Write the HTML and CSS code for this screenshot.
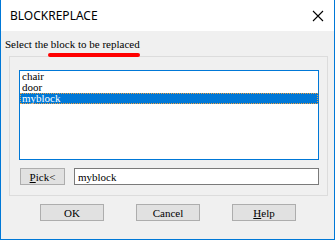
FILE: index.html
```html
<!DOCTYPE html>
<html lang="en">

<head>
    <meta charset="UTF-8">
    <meta name="viewport" content="width=device-width, initial-scale=1.0">
    <title>BLOCKREPLACE</title>
    <link rel="stylesheet" href="styles.css">
</head>

<body>
    <div class="window">
        <div class="titlebar">
            <span class="title">BLOCKREPLACE</span>
            <svg class="close" width="12" height="12" viewBox="0 0 12 12">
                <path d="M1 1 L11 11 M11 1 L1 11" stroke="#000" stroke-width="1.1" fill="none" />
            </svg>
        </div>
        <div class="content">
            <div class="prompt">Select the block to be replaced</div>
            <span class="marker"></span>
            <div class="group">
                <ul class="list">
                    <li>chair</li>
                    <li>door</li>
                    <li class="selected">myblock</li>
                </ul>
                <div class="pick-row">
                    <button type="button" class="btn pick"><u>P</u>ick&lt;</button>
                    <input type="text" class="name" value="myblock">
                </div>
            </div>
            <div class="actions">
                <button type="button" class="btn">OK</button>
                <button type="button" class="btn">Cancel</button>
                <button type="button" class="btn"><u>H</u>elp</button>
            </div>
        </div>
    </div>
</body>

</html>
```

FILE: styles.css
```css
body {
    margin: 0;
    font-family: "Liberation Serif", serif;
    font-size: 11px;
    background: #ffffff;
}

.window {
    width: 335px;
    height: 240px;
    box-sizing: border-box;
    border: 1px solid #0078d7;
    border-top: none;
    display: flex;
    flex-direction: column;
    background: #f0f0f0;
}

.titlebar {
    height: 31px;
    background: #ffffff;
    display: flex;
    align-items: center;
    justify-content: space-between;
    padding: 0 9px 0 9px;
    flex-shrink: 0;
}

.title {
    font-family: "Noto Sans", sans-serif;
    font-size: 12px;
    color: #000;
}

.close {
    margin-right: 1px;
}

.content {
    position: relative;
    flex: 1;
    padding: 6px 0 0 4px;
}

.prompt {
    height: 19px;
    line-height: 14px;
}

.marker {
    position: absolute;
    left: 47px;
    top: 22px;
    width: 92px;
    height: 4px;
    border-radius: 2px;
    background: #ff0000;
}

.group {
    margin-left: 4px;
    width: 319px;
    box-sizing: border-box;
    border: 1px solid #dcdcdc;
    padding: 13px 8px 10px 9px;
}

.list {
    list-style: none;
    margin: 0;
    padding: 0;
    height: 90px;
    box-sizing: border-box;
    border: 1px solid #0078d7;
    background: #fff;
}

.list li {
    height: 11px;
    line-height: 11px;
    padding-left: 2px;
}

.list li.selected {
    background: #0078d7;
    color: #fff;
    outline: 1px dotted #f0a040;
    outline-offset: -1px;
}

.pick-row {
    display: flex;
    margin-top: 8px;
    gap: 9px;
    padding-left: 1px;
}

.btn {
    font-family: "Liberation Serif", serif;
    font-size: 11px;
    width: 64px;
    height: 17px;
    padding: 0;
    background: #e1e1e1;
    border: 1px solid #adadad;
    color: #000;
    line-height: 14px;
}

.pick {
    width: 45px;
}

.name {
    flex: 1;
    height: 17px;
    box-sizing: border-box;
    border: 1px solid #7a7a7a;
    font-family: "Liberation Serif", serif;
    font-size: 11px;
    padding: 0 3px;
    margin: 0;
}

.actions {
    display: flex;
    gap: 32px;
    margin-top: 8px;
    padding-left: 35px;
}
```
